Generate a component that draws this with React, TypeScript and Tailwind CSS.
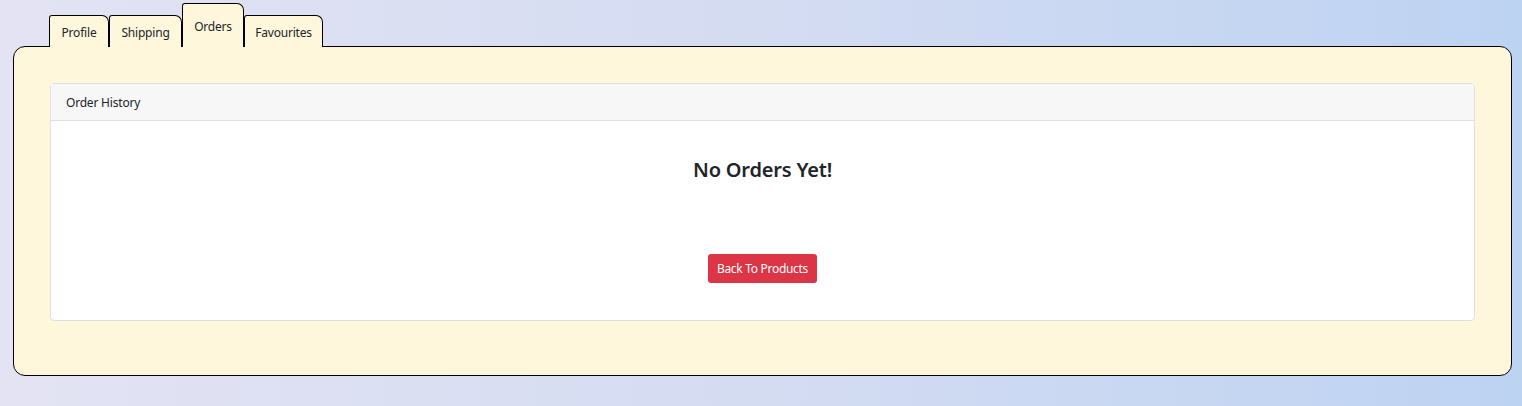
import { useState } from 'react'

const tabs = [
  { name: 'Profile', w: 'w-[60px]' },
  { name: 'Shipping', w: 'w-[73px]' },
  { name: 'Orders', w: 'w-[62px]' },
  { name: 'Favourites', w: 'w-[79px]' },
]

export default function App() {
  const [active, setActive] = useState('Orders')

  return (
    <div className="min-h-[406px] w-full bg-[linear-gradient(to_right,#e3e3f3,#d4dcf2_50%,#bdd3f2)] pl-[13px] pr-[10px] pt-[2px] pb-[31px] text-[#212529] font-['Noto_Sans',sans-serif]">
      {/* Tabs */}
      <div className="flex items-end pl-[36px] h-[44px] relative z-10">
        {tabs.map(t => (
          <button
            key={t.name}
            onClick={() => setActive(t.name)}
            className={`${t.w} -mb-px border border-b-0 border-black bg-[#fef7dc] rounded-tl-[3px] rounded-tr-[7px] text-[12px] tracking-[-0.2px] leading-none ${
              t.name === active ? 'h-[44px] pt-[17px] flex items-start justify-center' : 'h-[32px] pt-[2px]'
            }`}
          >
            {t.name}
          </button>
        ))}
      </div>

      {/* Panel */}
      <div className="border border-black rounded-[12px] bg-[#fef7dc] px-[36px] pt-[36px] pb-[54px]">
        <div className="border border-[#dfdfdf] rounded-[4px] bg-white">
          <div className="h-[37px] flex items-center px-[15px] pt-[2px] bg-[#f7f7f7] border-b border-[#dfdfdf] text-[12px] tracking-[-0.2px]">
            Order History
          </div>
          <div className="h-[199px] flex flex-col items-center">
            <h2 className="mt-[36px] text-[20px] font-semibold leading-[26px] tracking-[-0.2px]">No Orders Yet!</h2>
            <button className="mt-[71px] h-[29px] w-[109px] rounded-[3px] bg-[#dc3545] text-white text-[12px] tracking-[-0.3px]">
              Back To Products
            </button>
          </div>
        </div>
      </div>
    </div>
  )
}
